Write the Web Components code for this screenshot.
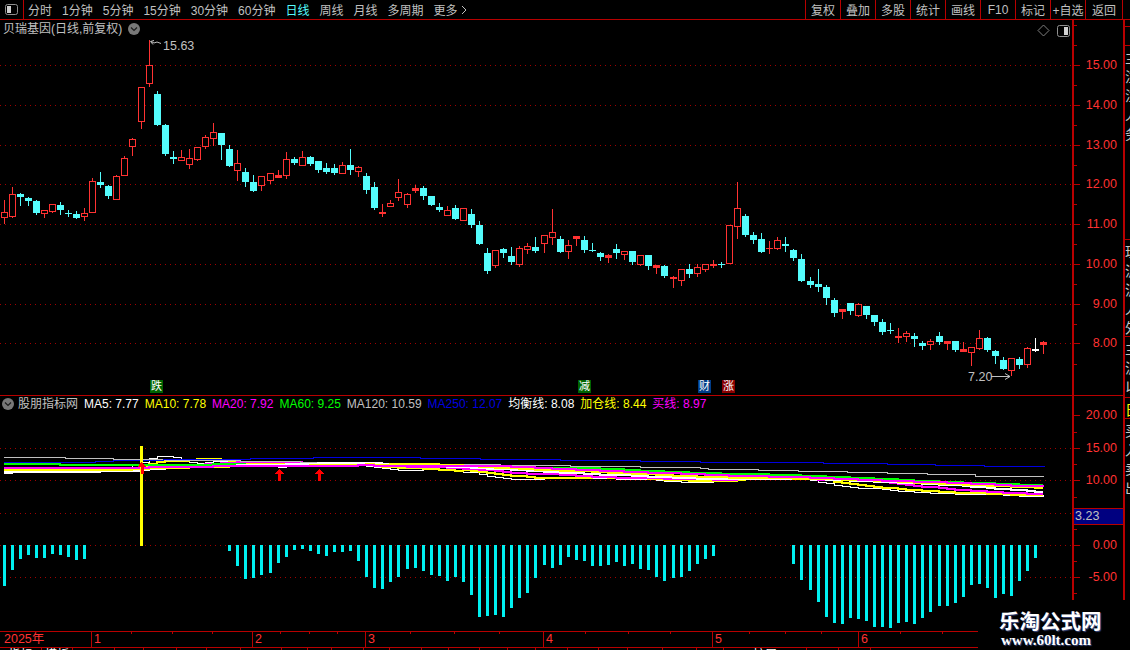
<!DOCTYPE html>
<html lang="zh">
<head>
<meta charset="utf-8">
<title>贝瑞基因</title>
<style>
    html, body { margin: 0; background: #000; }
</style>
</head>
<body>
<tdx-app></tdx-app>
<script>
const LINE = '#b80000';
const RED = '#ff3232';
const CYAN = '#54fcfc';
const FONT = `"Liberation Sans", "Noto Sans CJK SC", sans-serif`;

// candle rows as read from the chart: x, wick top, body top, body bottom, wick bottom, kind
// r hollow red, f solid red, c cyan, w white. Each block has its own origin and is scaled by 3.
const block = (ox, oy, rows) => rows.map(([x, wt, bt, bb, wb, k]) => ({
    x: Math.round(ox + x / 3),
    wt: Math.round(oy + wt / 3), bt: Math.round(oy + bt / 3),
    bb: Math.round(oy + bb / 3), wb: Math.round(oy + wb / 3), k
}));

const CANDLES = [
    ...block(0, 60, [
        [13,420,457,472,488,'r'],[37,381,403,467,470,'r'],[61,400,403,411,434,'c'],[85,411,414,422,434,'c'],
        [109,420,423,458,461,'c'],[133,450,451,460,470,'r'],[157,433,433,452,457,'r'],[181,427,435,449,461,'c'],
        [205,450,458,460,467,'c'],[229,453,462,473,473,'c'],[253,444,460,467,480,'r'],[277,355,364,455,455,'r'],
        [301,336,366,375,381,'c'],[325,375,378,408,414,'c'],[349,345,349,416,416,'r'],[373,289,295,344,344,'r'],
        [397,235,238,257,285,'r'],[424,82,82,182,204,'r'],[448,-60,16,68,78,'r'],[472,94,102,195,195,'c'],
        [496,192,195,282,285,'c'],[520,273,291,297,309,'c'],[544,270,292,299,300,'r'],[568,267,295,311,324,'r'],
        [592,262,262,296,300,'r'],[616,226,232,257,264,'r'],[640,189,217,233,255,'r'],[664,219,219,255,297,'c'],
        [688,255,267,318,318,'c'],[712,270,310,329,360,'r'],[736,324,336,366,378,'c'],[760,345,366,393,393,'c'],
        [784,348,349,374,390,'r'],[811,340,340,359,369,'r'],[835,330,346,351,351,'f'],[859,276,298,344,354,'r'],
        [883,291,297,309,312,'c'],[907,273,292,314,315,'r'],[931,288,291,312,315,'c'],[955,303,303,330,336,'c'],
        [979,309,324,336,339,'c'],[1003,312,324,339,342,'c'],[1027,306,316,338,339,'r'],[1051,267,315,330,342,'c'],
        [1075,318,322,332,348,'r'],[1099,339,348,390,399,'c']
    ]),
    ...block(360, 140, [
        [43,126,141,204,207,'c'],[67,192,216,218,228,'f'],[91,180,190,197,198,'r'],[115,117,157,171,180,'r'],
        [142,159,163,191,201,'r'],[166,135,144,149,156,'f'],[190,138,144,168,177,'c'],[214,168,168,195,195,'c'],
        [238,189,201,210,213,'c'],[262,198,211,224,225,'r'],[286,195,205,237,237,'c'],[310,204,205,239,240,'r'],
        [334,207,222,255,261,'c'],[358,243,255,312,312,'c'],[382,324,339,393,399,'c'],[406,330,331,374,381,'r'],
        [430,324,327,339,351,'c'],[454,321,348,366,372,'c'],[478,318,325,372,378,'r'],[502,309,319,326,339,'r'],
        [526,291,321,333,336,'c'],[553,285,286,308,336,'r'],[577,207,277,290,312,'r'],[601,288,297,336,336,'c'],
        [625,300,316,332,354,'r'],[649,288,289,293,315,'f'],[673,288,300,330,336,'c'],[697,309,331,333,333,'c'],
        [721,336,339,351,360,'c'],[745,342,344,350,366,'r'],[769,312,327,339,354,'c'],[793,333,334,341,357,'r'],
        [817,333,333,366,372,'c'],[841,345,346,371,375,'r'],[865,345,345,378,387,'c'],[889,375,376,380,399,'f'],
        [913,375,378,408,411,'c'],[940,408,411,415,441,'f'],[964,387,388,419,435,'r'],[988,372,387,402,411,'c'],
        [1012,372,382,398,408,'r'],[1036,372,373,386,393,'r'],[1060,360,372,374,381,'f'],[1084,366,372,374,381,'c']
    ]),
    ...block(720, 175, [
        [28,150,151,263,263,'r'],[52,21,100,152,189,'r'],[76,117,123,180,183,'c'],[100,171,180,195,204,'c'],
        [124,174,192,231,231,'c'],[148,198,218,220,234,'f'],[172,186,196,218,222,'r'],[196,186,208,213,228,'c'],
        [220,222,225,249,255,'c'],[244,237,252,318,318,'c'],[271,306,318,330,336,'c'],[295,282,327,336,348,'c'],
        [319,330,336,369,387,'c'],[343,369,375,414,423,'c'],[367,402,402,407,429,'f'],[391,384,384,408,417,'c'],
        [415,384,388,420,423,'r'],[439,393,393,420,429,'c'],[463,420,420,441,450,'c'],[487,432,441,471,477,'c'],
        [511,444,465,468,474,'c'],[535,459,483,485,501,'f'],[559,468,475,482,498,'r'],[583,474,483,492,513,'c'],
        [607,498,504,513,522,'c'],[631,492,499,506,522,'r'],[658,471,483,501,507,'c'],[682,498,498,503,522,'f'],
        [706,498,498,525,528,'c'],[730,501,522,527,528,'f'],[754,516,517,530,570,'r'],[778,465,490,518,522,'r'],
        [802,486,489,525,528,'c'],[826,525,528,543,564,'c'],[850,546,555,582,582,'c'],[874,549,550,584,600,'r'],
        [898,546,552,570,579,'c'],[922,516,520,566,576,'r'],[946,489,522,525,528,'w'],[970,498,501,507,534,'f']
    ])
];

// histogram depth below the zero line, 3x zoom rows (0 means no bar)
const HIST = [
    150,102,69,57,66,66,54,57,63,72,69,
    0,0,0,0,0,0,0,0,0,0,0,0,0,0,0,0,0,
    45,90,129,126,117,111,81,63,42,39,45,54,60,48,48,45,75,123,156,159,138,123,99,96,105,117,120,135,
    123,138,177,243,240,237,243,216,186,171,126,87,96,
    87,63,72,75,90,90,87,78,90,84,99,102,123,135,126,123,105,84,69,60,
    0,0,0,0,0,0,0,0,0,
    84,132,162,198,243,261,264,246,249,255,273,273,276,261,258,264,246,228,210,210,201,183,147,144,156,186,174,180,135,105,66
];

const priceOf = y => 15 - (y - 65.3) / 39.74;
const closes = CANDLES.map(c => priceOf(c.k === 'c' ? c.bb : c.bt));

function movingAverage(period, seed) {
    return closes.map((_, i) => {
        let sum = 0;
        for (let j = i - period + 1; j <= i; j++) sum += j >= 0 ? closes[j] : seed;
        return sum / period;
    });
}

function stepPath(points) {
    return points.map(([x, y], i) => i === 0 ? `M${x} ${y}` : `H${x}V${y}`).join('');
}

function maPath(values) {
    const pts = values.map((v, i) => [CANDLES[i].x, Math.round(544.3 - v * 6.48)]);
    return stepPath(pts);
}

const GRAY_LINE = [[4,456],[65,457],[113,458],[165,459],[240,460],[300,461],[360,462],[430,463],[500,464],[570,465],[640,466],[700,467],[708,468],[758,469],[798,470],[847,471],[887,472],[927,473],[975,475],[1044,475]];
const BLUE_LINE = [[4,461],[95,460],[113,459],[163,458],[250,457],[313,456],[420,457],[480,458],[560,459],[640,460],[700,461],[823,462],[887,463],[935,464],[984,465],[1044,466]];

class TdxToolbar extends HTMLElement {
    constructor() {
        super();
        this.attachShadow({ mode: 'open' });
        const left = ['分时', '1分钟', '5分钟', '15分钟', '30分钟', '60分钟', '日线', '周线', '月线', '多周期', '更多'];
        const right = ['复权', '叠加', '多股', '统计', '画线', 'F10', '标记', '+自选', '返回'];
        this.shadowRoot.innerHTML = `
            <style>
                :host {
                    display: flex;
                    height: 19px;
                    border-bottom: 1px solid ${LINE};
                    font: 12px ${FONT};
                    color: #c0c0c0;
                    background: #000;
                }
                .toggle {
                    width: 23px;
                    border-right: 1px solid ${LINE};
                    display: flex;
                    align-items: center;
                    justify-content: center;
                }
                nav {
                    flex: 1;
                    display: flex;
                    align-items: center;
                    gap: 10px;
                    padding-left: 4px;
                    white-space: nowrap;
                }
                .on { color: #54fcfc; }
                .more { display: flex; align-items: center; gap: 3px; }
                .tools { display: flex; padding-right: 7px; }
                .tools span {
                    width: 34px;
                    border-left: 1px solid ${LINE};
                    display: flex;
                    align-items: center;
                    justify-content: center;
                    white-space: nowrap;
                }
                .tools span:last-child { width: 36px; border-right: 1px solid ${LINE}; }
            </style>
            <div class="toggle">
                <svg width="13" height="11" viewBox="0 0 13 11"><rect x=".5" y=".5" width="12" height="10" rx="2" fill="none" stroke="#909090"/><rect x="2" y="2" width="4" height="7" fill="#d0d0d0"/></svg>
            </div>
            <nav>
                ${left.map(t => t === '更多'
                    ? `<span class="more">${t}<svg width="7" height="10" viewBox="0 0 7 10"><path d="M1 1l4 4-4 4" fill="none" stroke="#c0c0c0"/></svg></span>`
                    : `<span class="${t === '日线' ? 'on' : ''}">${t}</span>`).join('')}
            </nav>
            <div class="tools">${right.map(t => `<span>${t}</span>`).join('')}</div>
        `;
    }
}

class AxisScale extends HTMLElement {
    static get observedAttributes() { return ['top', 'labels', 'ticks']; }
    constructor() {
        super();
        this.attachShadow({ mode: 'open' });
    }
    connectedCallback() {
        const top = +this.getAttribute('top');
        const labels = JSON.parse(this.getAttribute('labels'));
        const ticks = JSON.parse(this.getAttribute('ticks'));
        this.shadowRoot.innerHTML = `
            <style>
                :host {
                    display: block;
                    position: relative;
                    box-sizing: border-box;
                    width: 51px;
                    border-left: 2px solid ${LINE};
                    font: 12.5px "Liberation Sans", sans-serif;
                    color: ${RED};
                }
                .tick { position: absolute; left: 0; height: 1px; background: ${LINE}; }
                .label { position: absolute; right: 6px; line-height: 14px; }
            </style>
            <slot></slot>
            ${labels.map(([t, y]) => `
                <div class="tick" style="top:${y - top}px;width:6px"></div>
                <div class="label" style="top:${y - top - 7}px">${t}</div>`).join('')}
            ${ticks.map(y => `<div class="tick" style="top:${y - top}px;width:3px"></div>`).join('')}
        `;
    }
}

class PriceChart extends HTMLElement {
    constructor() {
        super();
        this.attachShadow({ mode: 'open' });
        const grid = [65, 105, 145, 184, 224, 264, 304, 343];
        const candles = CANDLES.map(c => {
            const color = c.k === 'c' ? CYAN : c.k === 'w' ? '#ffffff' : RED;
            let out = `<rect x="${c.x}" y="${c.wt}" width="1" height="${c.wb - c.wt + 1}" fill="${color}"/>`;
            if (c.k === 'r' && c.bb - c.bt > 2) {
                out += `<rect x="${c.x - 3}" y="${c.bt}" width="7" height="${c.bb - c.bt + 1}" fill="#000"/>`;
                out += `<rect x="${c.x - 2.5}" y="${c.bt + .5}" width="6" height="${c.bb - c.bt}" fill="none" stroke="${color}"/>`;
            } else {
                out += `<rect x="${c.x - 3}" y="${c.bt}" width="7" height="${Math.max(c.bb - c.bt + (c.k === 'c' ? 0 : 1), 1)}" fill="${color}"/>`;
            }
            return out;
        }).join('');
        this.shadowRoot.innerHTML = `
            <style>
                :host {
                    display: flex;
                    height: 375px;
                    border-bottom: 1px solid ${LINE};
                    font: 12px ${FONT};
                    color: #c0c0c0;
                }
                .plot { position: relative; flex: 1; overflow: hidden; }
                svg { display: block; }
                header {
                    position: absolute;
                    left: 3px;
                    top: 2px;
                    display: flex;
                    align-items: center;
                    gap: 6px;
                    line-height: 14px;
                    white-space: nowrap;
                }
                .tag {
                    position: absolute;
                    top: 360px;
                    width: 13px;
                    height: 13px;
                    font-size: 11px;
                    line-height: 13px;
                    text-align: center;
                    color: #fff;
                }
                .note { position: absolute; line-height: 14px; font-size: 12.5px; font-family: "Liberation Sans", sans-serif; }
                .corner {
                    position: absolute;
                    right: 2px;
                    top: 4px;
                    display: flex;
                    align-items: center;
                    gap: 7px;
                }
            </style>
            <div class="plot">
                <svg width="1072" height="375" viewBox="0 20 1072 375" shape-rendering="crispEdges">
                    ${grid.map(y => `<line x1="0" x2="1072" y1="${y + .5}" y2="${y + .5}" stroke="#a00000" stroke-dasharray="1 4"/>`).join('')}
                    ${candles}
                    <g shape-rendering="auto" fill="none" stroke="#c0c0c0">
                        <path d="M154 40.5l-3.5 1 2.5 3M151 41.5l3 1.5 3-1 4 1.5"/>
                        <path d="M991 376.5h19M1005 373.5l5 3-5 3"/>
                    </g>
                </svg>
                <header>
                    <span>贝瑞基因(日线,前复权)</span>
                    <svg width="12" height="12" viewBox="0 0 12 12"><circle cx="6" cy="6" r="6" fill="#787878"/><path d="M3 4.5l3 3 3-3" fill="none" stroke="#1c1c1c" stroke-width="1.2"/></svg>
                </header>
                <span class="note" style="left:163px;top:19px">15.63</span>
                <span class="note" style="left:968px;top:350px">7.20</span>
                <span class="tag" style="left:150px;background:#006400">跌</span>
                <span class="tag" style="left:578px;background:#006400">减</span>
                <span class="tag" style="left:698px;background:#003c88">财</span>
                <span class="tag" style="left:722px;background:#8a0000">涨</span>
                <div class="corner">
                    <svg width="13" height="13" viewBox="0 0 13 13"><path d="M6.5 1l5.5 5.5-5.5 5.5L1 6.5z" fill="none" stroke="#808080"/></svg>
                    <svg width="13" height="12" viewBox="0 0 13 12"><rect x=".5" y=".5" width="12" height="11" rx="2" fill="none" stroke="#909090"/><rect x="7" y="2" width="4" height="8" fill="#d0d0d0"/></svg>
                </div>
            </div>
            <axis-scale top="20"
                labels='[["15.00",65],["14.00",105],["13.00",145],["12.00",184],["11.00",224],["10.00",264],["9.00",304],["8.00",343]]'
                ticks='[25,45,85,125,165,204,244,284,324,364]'></axis-scale>
        `;
    }
}

class IndicatorChart extends HTMLElement {
    constructor() {
        super();
        this.attachShadow({ mode: 'open' });
        const legend = [
            ['MA5: 7.77', '#ffffff'], ['MA10: 7.78', '#ffff00'], ['MA20: 7.92', '#ff00ff'], ['MA60: 9.25', '#00ff00'],
            ['MA120: 10.59', '#c0c0c0'], ['MA250: 12.07', '#0000e0'], ['均衡线: 8.08', '#ffffff'], ['加仓线: 8.44', '#ffff00'], ['买线: 8.97', '#ff00ff']
        ];
        const lines = [
            [movingAverage(5, 11.2), '#ffffff', 1],
            [movingAverage(10, 11.4), '#ffff00', 2],
            [movingAverage(20, 11.6), '#ff00ff', 2],
            [movingAverage(60, 12.6), '#00ff00', 2],
            [movingAverage(30, 11.3), '#ffffff', 2],
            [movingAverage(40, 11.7), '#ffff00', 2],
            [movingAverage(50, 12.0), '#ff00ff', 2]
        ];
        const bars = HIST.map((d, i) => d && CANDLES[i]
            ? `<rect x="${CANDLES[i].x - 1}" y="544" width="3" height="${Math.round((d - 27) / 3)}" fill="#00f0f0"/>` : '').join('');
        const arrow = (x, y) => `<path d="M${x} ${y}l5 5h-3v7h-3v-7h-3z" fill="#ff0000"/>`;
        this.shadowRoot.innerHTML = `
            <style>
                :host {
                    display: flex;
                    height: 235px;
                    font: 12px ${FONT};
                    color: #c0c0c0;
                }
                .plot { position: relative; flex: 1; overflow: hidden; }
                svg { display: block; }
                header {
                    position: absolute;
                    left: 2px;
                    top: 1px;
                    display: flex;
                    align-items: center;
                    gap: 6px;
                    line-height: 14px;
                    white-space: nowrap;
                }
                .name { margin: 0 0 0 -2px; }
            </style>
            <div class="plot">
                <svg width="1072" height="235" viewBox="0 395 1072 235" shape-rendering="crispEdges">
                    ${[447, 479, 512, 544, 576].map(y => `<line x1="0" x2="1072" y1="${y + .5}" y2="${y + .5}" stroke="#a00000" stroke-dasharray="1 4"/>`).join('')}
                    ${bars}
                    ${lines.slice(0, 4).map(([v, c, w]) => `<path d="${maPath(v)}" fill="none" stroke="${c}" stroke-width="${w}"/>`).join('')}
                    <path d="${stepPath(GRAY_LINE)}" fill="none" stroke="#c0c0c0"/>
                    <path d="${stepPath(BLUE_LINE)}" fill="none" stroke="#0000e0"/>
                    ${lines.slice(4).map(([v, c, w]) => `<path d="${maPath(v)}" fill="none" stroke="${c}" stroke-width="${w}"/>`).join('')}
                    <rect x="140" y="445" width="3" height="100" fill="#ffff00"/>
                    ${arrow(141.5, 461)}${arrow(279, 468)}${arrow(319, 468)}
                </svg>
                <header>
                    <svg width="12" height="12" viewBox="0 0 12 12"><circle cx="6" cy="6" r="6" fill="#787878"/><path d="M3 4.5l3 3 3-3" fill="none" stroke="#1c1c1c" stroke-width="1.2"/></svg>
                    <span class="name">股朋指标网</span>
                    ${legend.map(([t, c]) => `<span style="color:${c}">${t}</span>`).join('')}
                </header>
            </div>
            <axis-scale top="395"
                labels='[["20.00",414],["15.00",447],["10.00",479],["0.00",544],["-5.00",576]]'
                ticks='[431,463,496,528,560,592]'>
                <value-flag>3.23</value-flag>
            </axis-scale>
        `;
    }
}

class ValueFlag extends HTMLElement {
    constructor() {
        super();
        this.attachShadow({ mode: 'open' });
        this.shadowRoot.innerHTML = `
            <style>
                :host {
                    position: absolute;
                    left: 0;
                    right: 0;
                    top: 112px;
                    height: 15px;
                    padding-left: 1px;
                    background: #000080;
                    border-top: 1px solid ${LINE};
                    border-bottom: 1px solid ${LINE};
                    color: #c0c0c0;
                    line-height: 15px;
                }
            </style>
            <slot></slot>
        `;
    }
}

class TimeAxis extends HTMLElement {
    constructor() {
        super();
        this.attachShadow({ mode: 'open' });
        const months = [[91, '1'], [252, '2'], [365, '3'], [543, '4'], [712, '5'], [858, '6']];
        const ticks = [131, 172, 212, 280, 309, 337, 410, 454, 499, 585, 628, 670, 749, 785, 821, 900, 942];
        this.shadowRoot.innerHTML = `
            <style>
                :host {
                    display: block;
                    position: relative;
                    height: 15px;
                    border-top: 1px solid ${LINE};
                    border-bottom: 1px solid ${LINE};
                    font: 12.5px ${FONT};
                    color: ${RED};
                    line-height: 15px;
                }
                .year { position: absolute; left: 4px; top: 0; }
                .month { position: absolute; top: 0; bottom: 0; border-left: 1px solid ${LINE}; padding-left: 2px; }
                .tick { position: absolute; top: 0; width: 1px; height: 2px; background: ${LINE}; }
            </style>
            <span class="year">2025年</span>
            ${months.map(([x, t]) => `<span class="month" style="left:${x}px">${t}</span>`).join('')}
            ${ticks.map(x => `<i class="tick" style="left:${x}px"></i>`).join('')}
        `;
    }
}

class BottomTabs extends HTMLElement {
    constructor() {
        super();
        this.attachShadow({ mode: 'open' });
        const edges = [42, 73, 115, 144, 177, 207, 241, 282, 308, 332, 364, 390, 422, 449, 480, 508, 536, 568, 599, 628, 663, 697, 724, 807, 839, 871];
        const labels = { 0: '指标', 1: '模板', 23: '扩展' };
        let last = 0;
        const tabs = edges.map((x, i) => {
            const w = x - last;
            last = x;
            return `<span style="width:${w - 1}px">${labels[i] || ''}</span>`;
        }).join('');
        this.shadowRoot.innerHTML = `
            <style>
                :host {
                    display: flex;
                    height: 3px;
                    overflow: hidden;
                    font: 12px ${FONT};
                    color: #ffffff;
                }
                span {
                    display: block;
                    border-right: 1px solid ${LINE};
                    text-align: center;
                    line-height: 14px;
                    white-space: nowrap;
                    overflow: hidden;
                }
            </style>
            ${tabs}
        `;
    }
}

class SideStrip extends HTMLElement {
    constructor() {
        super();
        this.attachShadow({ mode: 'open' });
        const cells = [[19, ''], [194, '主注注人务'], [97, '理沪沪人外'], [61, '主沪以'], [21, '日'], [182, '买入卖出']];
        this.shadowRoot.innerHTML = `
            <style>
                :host {
                    display: block;
                    box-sizing: border-box;
                    width: 7px;
                    border-left: 2px solid ${LINE};
                    overflow: hidden;
                    font: 14px "Noto Sans CJK SC", sans-serif;
                    color: #c8c8c8;
                }
                div {
                    box-sizing: border-box;
                    border-bottom: 1px solid ${LINE};
                    width: 30px;
                    overflow: hidden;
                    line-height: 19px;
                    padding: 2px 0 0 0;
                }
                .sel { color: #ffff00; }
            </style>
            <div style="height:7px;padding:0"></div>
            ${cells.map(([h, t]) => `<div class="${t === '日' ? 'sel' : ''}" style="height:${h}px">${[...t].join('<br>')}</div>`).join('')}
        `;
    }
}

class WaterMark extends HTMLElement {
    constructor() {
        super();
        this.attachShadow({ mode: 'open' });
        this.shadowRoot.innerHTML = `
            <style>
                :host {
                    position: absolute;
                    left: 978px;
                    top: 600px;
                    width: 152px;
                    height: 50px;
                    background: #000;
                    display: flex;
                    flex-direction: column;
                    align-items: flex-start;
                    padding-left: 21px;
                    box-sizing: border-box;
                    color: #fff;
                    font-weight: bold;
                    text-shadow: 1px 1px 1px #3a4a80;
                    white-space: nowrap;
                }
                b { font: bold 20.5px "Noto Sans CJK SC", sans-serif; line-height: 24px; margin-top: 8px; }
                span { font: bold 15px "Liberation Serif", serif; line-height: 16px; margin-top: 0; padding-left: 2px; }
            </style>
            <b>乐淘公式网</b>
            <span>www.60lt.com</span>
        `;
    }
}

class TdxApp extends HTMLElement {
    constructor() {
        super();
        this.attachShadow({ mode: 'open' });
        this.shadowRoot.innerHTML = `
            <style>
                :host {
                    display: block;
                    position: relative;
                    width: 1130px;
                    height: 650px;
                    overflow: hidden;
                    background: #000;
                }
                .main { display: flex; height: 611px; }
                .charts { width: 1123px; }
            </style>
            <tdx-toolbar></tdx-toolbar>
            <div class="main">
                <div class="charts">
                    <price-chart></price-chart>
                    <indicator-chart></indicator-chart>
                </div>
                <side-strip></side-strip>
            </div>
            <time-axis></time-axis>
            <bottom-tabs></bottom-tabs>
            <water-mark></water-mark>
        `;
    }
}

customElements.define('axis-scale', AxisScale);
customElements.define('value-flag', ValueFlag);
customElements.define('tdx-toolbar', TdxToolbar);
customElements.define('price-chart', PriceChart);
customElements.define('indicator-chart', IndicatorChart);
customElements.define('time-axis', TimeAxis);
customElements.define('bottom-tabs', BottomTabs);
customElements.define('side-strip', SideStrip);
customElements.define('water-mark', WaterMark);
customElements.define('tdx-app', TdxApp);
</script>
</body>
</html>
